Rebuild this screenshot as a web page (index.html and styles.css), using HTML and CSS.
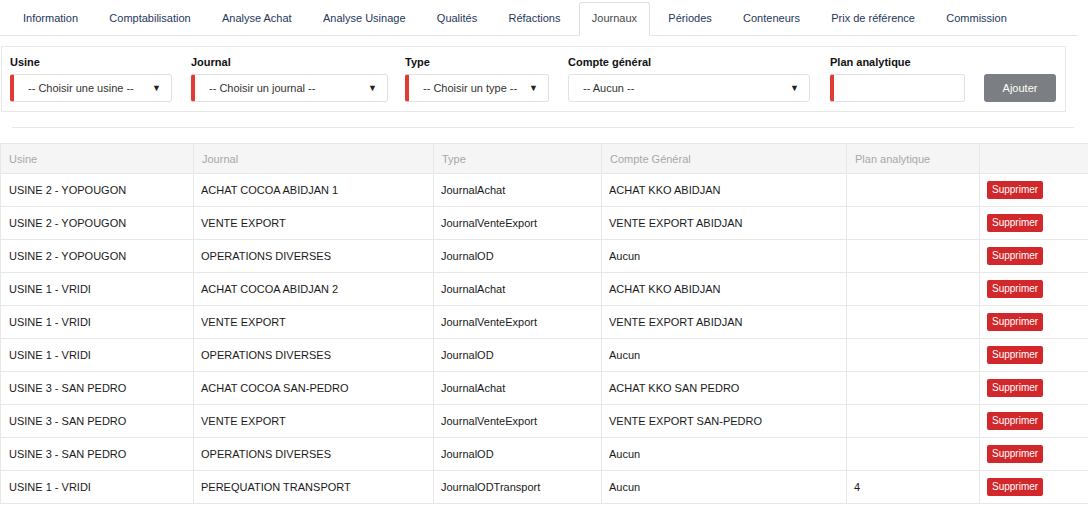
FILE: index.html
```html
<!DOCTYPE html>
<html lang="fr">
<head>
<meta charset="utf-8">
<title>Journaux</title>
<link rel="stylesheet" href="styles.css">
</head>
<body>
<ul class="tabs">
  <li class="tab">Information</li>
  <li class="tab">Comptabilisation</li>
  <li class="tab">Analyse Achat</li>
  <li class="tab">Analyse Usinage</li>
  <li class="tab">Qualités</li>
  <li class="tab">Réfactions</li>
  <li class="tab active">Journaux</li>
  <li class="tab">Périodes</li>
  <li class="tab">Conteneurs</li>
  <li class="tab">Prix de référence</li>
  <li class="tab">Commission</li>
</ul>

<div class="panel">
  <div class="field">
    <div class="label">Usine</div>
    <div class="select required"><span>-- Choisir une usine --</span><span class="caret">▼</span></div>
  </div>
  <div class="field">
    <div class="label">Journal</div>
    <div class="select required"><span>-- Choisir un journal --</span><span class="caret">▼</span></div>
  </div>
  <div class="field">
    <div class="label">Type</div>
    <div class="select required"><span>-- Choisir un type --</span><span class="caret">▼</span></div>
  </div>
  <div class="field">
    <div class="label">Compte général</div>
    <div class="select"><span>-- Aucun --</span><span class="caret">▼</span></div>
  </div>
  <div class="field">
    <div class="label">Plan analytique</div>
    <div class="select required"></div>
  </div>
  <div class="field">
    <div class="label">&nbsp;</div>
    <button class="btn-add">Ajouter</button>
  </div>
</div>

<div class="sep"></div>

<table class="grid">
  <colgroup>
    <col class="c1"><col class="c2"><col class="c3"><col class="c4"><col class="c5"><col class="c6">
  </colgroup>
  <thead>
    <tr><th>Usine</th><th>Journal</th><th>Type</th><th>Compte Général</th><th>Plan analytique</th><th></th></tr>
  </thead>
  <tbody>
    <tr><td>USINE 2 - YOPOUGON</td><td>ACHAT COCOA ABIDJAN 1</td><td>JournalAchat</td><td>ACHAT KKO ABIDJAN</td><td></td><td><span class="btn-del">Supprimer</span></td></tr>
    <tr><td>USINE 2 - YOPOUGON</td><td>VENTE EXPORT</td><td>JournalVenteExport</td><td>VENTE EXPORT ABIDJAN</td><td></td><td><span class="btn-del">Supprimer</span></td></tr>
    <tr><td>USINE 2 - YOPOUGON</td><td>OPERATIONS DIVERSES</td><td>JournalOD</td><td>Aucun</td><td></td><td><span class="btn-del">Supprimer</span></td></tr>
    <tr><td>USINE 1 - VRIDI</td><td>ACHAT COCOA ABIDJAN 2</td><td>JournalAchat</td><td>ACHAT KKO ABIDJAN</td><td></td><td><span class="btn-del">Supprimer</span></td></tr>
    <tr><td>USINE 1 - VRIDI</td><td>VENTE EXPORT</td><td>JournalVenteExport</td><td>VENTE EXPORT ABIDJAN</td><td></td><td><span class="btn-del">Supprimer</span></td></tr>
    <tr><td>USINE 1 - VRIDI</td><td>OPERATIONS DIVERSES</td><td>JournalOD</td><td>Aucun</td><td></td><td><span class="btn-del">Supprimer</span></td></tr>
    <tr><td>USINE 3 - SAN PEDRO</td><td>ACHAT COCOA SAN-PEDRO</td><td>JournalAchat</td><td>ACHAT KKO SAN PEDRO</td><td></td><td><span class="btn-del">Supprimer</span></td></tr>
    <tr><td>USINE 3 - SAN PEDRO</td><td>VENTE EXPORT</td><td>JournalVenteExport</td><td>VENTE EXPORT SAN-PEDRO</td><td></td><td><span class="btn-del">Supprimer</span></td></tr>
    <tr><td>USINE 3 - SAN PEDRO</td><td>OPERATIONS DIVERSES</td><td>JournalOD</td><td>Aucun</td><td></td><td><span class="btn-del">Supprimer</span></td></tr>
    <tr><td>USINE 1 - VRIDI</td><td>PEREQUATION TRANSPORT</td><td>JournalODTransport</td><td>Aucun</td><td>4</td><td><span class="btn-del">Supprimer</span></td></tr>
  </tbody>
</table>
</body>
</html>
```

FILE: styles.css
```css
* { box-sizing: border-box; }

body {
  margin: 0;
  background: #fff;
  font-family: "Liberation Sans", Arial, sans-serif;
  font-size: 11px;
  color: #222;
}

.tabs {
  list-style: none;
  margin: 0;
  padding: 2px 0 0 10px;
  width: 1078px;
  display: flex;
  border-bottom: 1px solid #e4e4e4;
}

.tab {
  height: 34px;
  line-height: 30px;
  padding: 0 12px;
  margin-right: 5.3px;
  margin-bottom: -1px;
  border: 1px solid transparent;
  border-radius: 3px 3px 0 0;
  color: #26375a;
  white-space: nowrap;
}

.tab.active {
  background: #fff;
  border-color: #e0e0e0;
  border-bottom-color: #fff;
  color: #4a4a4a;
}

.panel {
  margin: 10px 0 0 1px;
  width: 1065px;
  border: 1px solid #e8e8e8;
  padding: 8px 8px 9px 8px;
  display: flex;
}

.field:nth-child(1) { width: 162px; }
.field:nth-child(2) { width: 197px; margin-left: 19px; }
.field:nth-child(3) { width: 144px; margin-left: 17px; }
.field:nth-child(4) { width: 242px; margin-left: 19px; }
.field:nth-child(5) { width: 135px; margin-left: 20px; }
.field:nth-child(6) { width: 72px; margin-left: 19px; }

.label {
  font-weight: bold;
  color: #111;
  line-height: 14px;
  margin-bottom: 5px;
}

.select {
  height: 28px;
  border: 1px solid #e2e2e2;
  border-radius: 3px;
  display: flex;
  align-items: center;
  justify-content: space-between;
  padding: 0 10px 0 14px;
  color: #333;
}

.select.required {
  border-left: 4px solid #e23b35;
  padding-left: 14px;
}

.caret {
  font-size: 9px;
  color: #222;
}

.btn-add {
  width: 72px;
  height: 28px;
  border: none;
  border-radius: 3px;
  background: #7b7e83;
  color: #fff;
  font-family: "Liberation Sans", Arial, sans-serif;
  font-size: 11px;
  padding: 0;
}

.sep {
  margin: 15px 0 0 12px;
  width: 1062px;
  border-top: 1px solid #e8e8e8;
  height: 16px;
}

.grid {
  width: 1088px;
  border-collapse: collapse;
  table-layout: fixed;
}

.c1 { width: 193px; }
.c2 { width: 240px; }
.c3 { width: 168px; }
.c4 { width: 245px; }
.c5 { width: 133px; }
.c6 { width: 109px; }

.grid th {
  height: 30px;
  background: #f5f5f5;
  color: #a8a8a8;
  font-weight: normal;
  text-align: left;
  padding: 0 7px 0 8px;
  border: 1px solid #e8e8e8;
}

.grid td {
  height: 33px;
  padding: 0 7px 0 7px;
  border: 1px solid #e8e8e8;
  color: #1a1a1a;
  vertical-align: middle;
}

.grid td:first-child { padding-left: 8px; }

.btn-del {
  display: inline-block;
  height: 18px;
  line-height: 18px;
  padding: 0 5px;
  background: #d3282b;
  color: #fff;
  font-size: 10px;
  border-radius: 2px;
}
```
